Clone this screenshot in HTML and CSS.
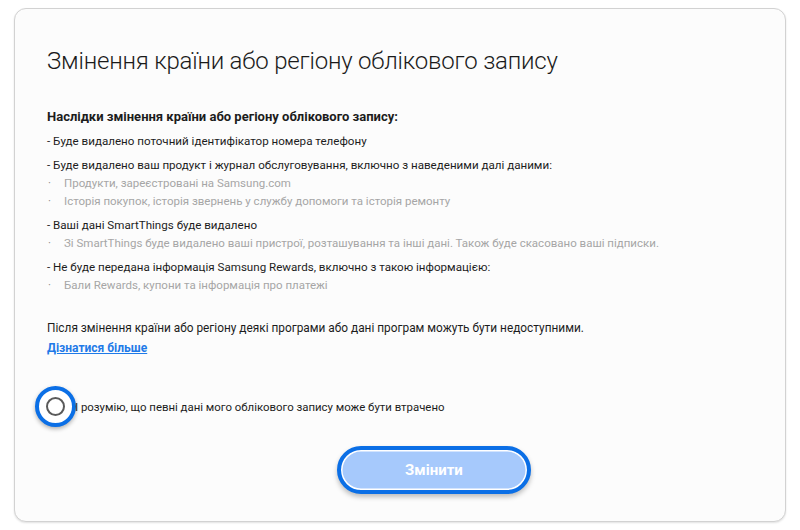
FILE: index.html
```html
<!DOCTYPE html>
<html lang="uk">
<head>
    <meta charset="UTF-8">
    <meta name="viewport" content="width=device-width, initial-scale=1.0">
    <title>Змінення країни або регіону облікового запису</title>
    <link rel="stylesheet" href="styles.css">
</head>
<body>
    <div class="card">
        <h1>Змінення країни або регіону облікового запису</h1>

        <h2>Наслідки змінення країни або регіону облікового запису:</h2>

        <div class="group">
            <p class="item">- Буде видалено поточний ідентифікатор номера телефону</p>
        </div>
        <div class="group">
            <p class="item">- Буде видалено ваш продукт і журнал обслуговування, включно з наведеними далі даними:</p>
            <ul class="sub">
                <li>Продукти, зареєстровані на Samsung.com</li>
                <li>Історія покупок, історія звернень у службу допомоги та історія ремонту</li>
            </ul>
        </div>
        <div class="group">
            <p class="item">- Ваші дані SmartThings буде видалено</p>
            <ul class="sub">
                <li>Зі SmartThings буде видалено ваші пристрої, розташування та інші дані. Також буде скасовано ваші підписки.</li>
            </ul>
        </div>
        <div class="group">
            <p class="item">- Не буде передана інформація Samsung Rewards, включно з такою інформацією:</p>
            <ul class="sub">
                <li>Бали Rewards, купони та інформація про платежі</li>
            </ul>
        </div>

        <p class="note">Після змінення країни або регіону деякі програми або дані програм можуть бути недоступними.</p>
        <a class="more" href="#">Дізнатися більше</a>

        <label class="agree">
            <span class="radio"><span class="dot"></span></span>
            <span>І розумію, що певні дані мого облікового запису може бути втрачено</span>
        </label>

        <div class="actions">
            <button type="button" class="btn">Змінити</button>
        </div>
    </div>
</body>
</html>
```

FILE: styles.css
```css
body {
    margin: 0;
    background: #ffffff;
    font-family: Roboto, "Noto Sans", sans-serif;
    color: #1c1c1c;
}
.card {
    margin: 8px 14px;
    height: 514px;
    box-sizing: border-box;
    border: 1px solid #d2d2d2;
    border-radius: 12px;
    background: #fcfcfc;
    box-shadow: 0 1px 2px rgba(0, 0, 0, 0.12);
    padding: 38px 32px 0 32px;
}
h1 {
    margin: 0 0 34px 0;
    font-size: 24px;
    font-weight: 300;
    letter-spacing: -0.2px;
    color: #1a1a1a;
}
h2 {
    margin: 0 0 8px 0;
    font-size: 13px;
    font-weight: 700;
}
p {
    margin: 0;
}
.group {
    margin-bottom: 6px;
}
.item {
    font-size: 11.6px;
    line-height: 18px;
}
.sub {
    list-style: none;
    margin: 0;
    padding: 0;
}
.sub li {
    position: relative;
    padding-left: 17px;
    font-size: 11.5px;
    line-height: 18px;
    color: #a6a6a6;
}
.sub li::before {
    content: "·";
    position: absolute;
    left: 1px;
    color: #888;
}
.note {
    margin-top: 25px;
    font-size: 11.85px;
    line-height: 18px;
}
.more {
    display: inline-block;
    margin-top: -2px;
    font-size: 12px;
    line-height: 18px;
    font-weight: 700;
    color: #1f7ae8;
}
.agree {
    display: flex;
    align-items: center;
    margin-top: 29px;
    margin-left: -12px;
    font-size: 11.4px;
}
.radio {
    width: 33px;
    height: 33px;
    border: 4px solid #0b6fe6;
    border-radius: 50%;
    background: #fff;
    box-shadow: 0 2px 4px rgba(0, 0, 0, 0.3);
    display: flex;
    align-items: center;
    justify-content: center;
    flex-shrink: 0;
    margin-right: -1px;
}
.dot {
    width: 15px;
    height: 15px;
    border: 2px solid #5a5a5a;
    border-radius: 50%;
}
.actions {
    display: flex;
    margin-top: 19px;
    padding-left: 290px;
}
.btn {
    width: 194px;
    height: 48px;
    border: 4px solid #0b6fe6;
    border-radius: 24px;
    background: #a6c9fc;
    box-shadow: inset 0 0 0 1.5px #ffffff, 0 3px 5px rgba(0, 0, 0, 0.25);
    color: #ffffff;
    font-family: Roboto, sans-serif;
    font-size: 15px;
    font-weight: 700;
}
```
